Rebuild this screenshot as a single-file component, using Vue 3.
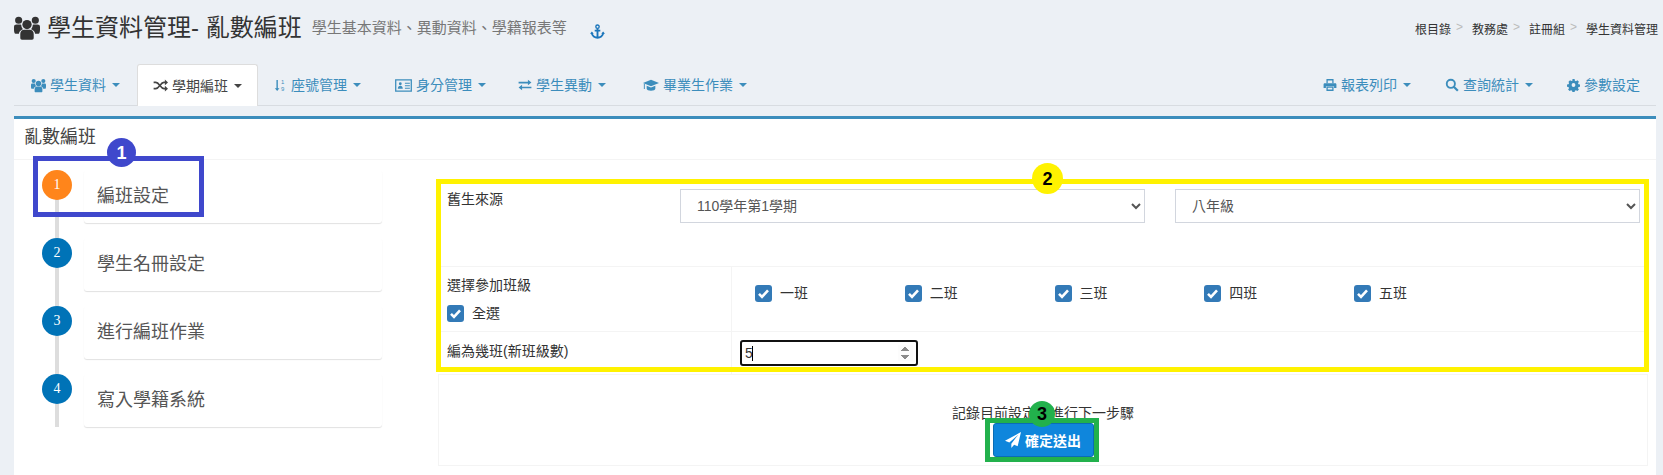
<script setup>
import { ref } from 'vue'

const users = [
  { d: 'M12 4.500a4.300 4.300 0 1 0 0 8.600a4.300 4.300 0 0 0 0-8.600z' },
  { d: 'M5.800 21v-3.500c0-2.500 1.600-3.900 3.600-3.900h5.200c2 0 3.600 1.400 3.600 3.900V21c0 1-.6 1.800-1.600 1.800H7.400c-1 0-1.600-.8-1.600-1.800z' },
  { d: 'M4.300 1.500a3.300 3.300 0 1 0 0 6.600a3.300 3.300 0 0 0 0-6.600z' },
  { d: 'M19.700 1.500a3.300 3.300 0 1 0 0 6.600a3.300 3.300 0 0 0 0-6.600z' },
  { d: 'M0 13.500v-2.500c0-1.400 1-2.200 2.400-2.200h3c.5 0 1 .1 1.300.4a5.500 5.500 0 0 0 1.500 4c-2 .6-3.500 2.200-3.700 4H1.400C.5 17.200 0 15.500 0 13.500z' },
  { d: 'M24 13.500v-2.500c0-1.400-1-2.200-2.400-2.200h-3c-.5 0-1 .1-1.300.4a5.500 5.500 0 0 1-1.500 4c2 .6 3.500 2.200 3.700 4h3.100c.9 0 1.400-1.700 1.400-3.700z' }
]
const tabs = [
  { label: '學生資料', slot: 19, w: 15, first: true, paths: users, caret: true },
  { label: '學期編班', slot: 19, w: 15, active: true, caret: true, paths: [
    { d: 'M1 7h3.500c5.500 0 7.500 10 13 10h2.500', line: 2.600 },
    { d: 'M1 17h3.500c5.500 0 7.500-10 13-10h2.500', line: 2.600 },
    { d: 'M19 2.500l5 4.500-5 4.500z' },
    { d: 'M19 12.500l5 4.500-5 4.500z' } ] },
  { label: '座號管理', slot: 17, w: 13, caret: true, paths: [
    { d: 'M4.500 2h2.600v15h3l-4.300 5-4.300-5h3z' } ],
    texts: [ { t: '1', y: 10 }, { t: '9', y: 22 } ] },
  { label: '身分管理', slot: 23, w: 17, caret: true, paths: [
    { d: 'M1 4h22v16H1z', line: 1.800 },
    { d: 'M7.500 7.500a2 2 0 1 0 0 4a2 2 0 0 0 0-4zM4 16.500c0-2.500 1.500-4 3.500-4s3.500 1.500 3.500 4z' },
    { d: 'M14 8h7v1.600h-7zM14 11.500h7v1.600h-7zM14 15h7v1.600h-7z' } ] },
  { label: '學生異動', slot: 18, w: 14, caret: true, paths: [
    { d: 'M1 6.500h16V3l6 4.800-6 4.800V9.300H1z' },
    { d: 'M23 17.700H7v3.500l-6-4.800 6-4.800v3.300h16z' } ] },
  { label: '畢業生作業', slot: 25, w: 16, caret: true, paths: [
    { d: 'M12 4L0 9l12 5 12-5z' },
    { d: 'M5.500 13v4.500c0 1.800 3 3 6.500 3s6.500-1.200 6.500-3V13L12 15.700z' },
    { d: 'M1.300 10v8h1.400v-8z' } ] },
  { label: '報表列印', slot: 18, w: 14, caret: true, push: true, right: true, paths: [
    { d: 'M7 9V3h10v6', line: 2.200 },
    { d: 'M3 9h18c1 0 2 1 2 2v6h-4v-3H5v3H1v-6c0-1 1-2 2-2z' },
    { d: 'M7 15.500h10V21H7z', line: 2.200 } ] },
  { label: '查詢統計', slot: 18, w: 14, caret: true, right: true, paths: [
    { d: 'M10 3a7 7 0 1 0 0 14a7 7 0 0 0 0-14z', line: 3.200 },
    { d: 'M15 15l7 7', line: 3.800 } ] },
  { label: '參數設定', slot: 17, w: 14, paths: [
    { odd: true, d: 'M10 1h4l.6 3 2 .9 2.600-1.700 2.800 2.800-1.700 2.600.9 2 3 .6v4l-3 .6-.9 2 1.700 2.600-2.800 2.800-2.600-1.700-2 .9-.6 3h-4l-.6-3-2-.9-2.600 1.700-2.800-2.800 1.700-2.600-.9-2-3-.6v-4l3-.6.9-2L2.800 5.800l2.800-2.800 2.600 1.700 2-.9zM12 8.500a3.500 3.500 0 1 0 0 7a3.500 3.500 0 0 0 0-7z' } ] }
]
const crumbs = ['根目錄', '教務處', '註冊組', '學生資料管理']
const steps = ['編班設定', '學生名冊設定', '進行編班作業', '寫入學籍系統']
const classes = ['一班', '二班', '三班', '四班', '五班']
const count = ref(5)
</script>

<template>
  <div class="page">
    <header class="head">
      <svg class="title-icon" viewBox="0 1 24 22" width="26" height="24">
        <path v-for="p in users" :key="p.d" :d="p.d" />
      </svg>
      <h1 class="title">學生資料管理- 亂數編班</h1>
      <span class="sub">學生基本資料、異動資料、學籍報表等</span>
      <svg class="anchor" viewBox="0 0 24 24" width="15" height="15">
        <path d="M12 1.500a2.700 2.700 0 1 0 0 5.400a2.700 2.700 0 0 0 0-5.400z" fill="none" stroke="currentColor" stroke-width="2.200" />
        <path d="M12 7v15M7.500 10.500h9M3 14.500c0 4.500 5 7.500 9 7.500s9-3 9-7.500" fill="none" stroke="currentColor" stroke-width="3" />
        <path d="M0 15.500l3-3.500 3 3.500zM18 15.500l3-3.500 3 3.500z" fill="currentColor" />
      </svg>
      <ol class="crumbs">
        <li v-for="(c, i) in crumbs" :key="c" class="crumb">
          <span>{{ c }}</span><span v-if="i < crumbs.length - 1" class="sep">&gt;</span>
        </li>
      </ol>
    </header>

    <nav class="tabs">
      <a v-for="t in tabs" :key="t.label" class="tab" :class="{ active: t.active, push: t.push, first: t.first, right: t.right }">
        <span class="tab-slot" :style="{ width: t.slot + 'px' }">
          <svg viewBox="0 0 24 24" :width="t.w" :height="t.w">
            <template v-for="p in t.paths" :key="p.d">
              <path v-if="p.line" :d="p.d" fill="none" stroke="currentColor" :stroke-width="p.line" />
              <path v-else :d="p.d" fill="currentColor" :fill-rule="p.odd ? 'evenodd' : 'nonzero'" />
            </template>
            <text v-for="x in t.texts" :key="x.t" x="13" :y="x.y" class="mini">{{ x.t }}</text>
          </svg>
        </span>
        <span>{{ t.label }}</span>
        <i v-if="t.caret" class="caret"></i>
      </a>
    </nav>

    <section class="panel">
      <div class="panel-head">亂數編班</div>
      <div class="panel-body">
        <ul class="steps">
          <li v-for="(s, i) in steps" :key="s" class="step">
            <div class="rail">
              <span class="dot" :class="{ current: i === 0 }">{{ i + 1 }}</span>
            </div>
            <div class="card">{{ s }}</div>
          </li>
        </ul>

        <div class="form">
          <div class="row-source">
            <label class="source-label">舊生來源</label>
            <select class="sel">
              <option>110學年第1學期</option>
            </select>
            <select class="sel">
              <option>八年級</option>
            </select>
          </div>
          <div class="row-grid row-classes">
            <div class="cell-label">
              <div class="join">選擇參加班級</div>
              <label class="check"><span class="box"><svg viewBox="0 0 17 17" width="17" height="17"><path d="M4 8.800l3 3 6-6.500" fill="none" stroke="#fff" stroke-width="2.600" /></svg></span>全選</label>
            </div>
            <div class="cell-classes">
              <label v-for="c in classes" :key="c" class="check cls">
                <span class="box"><svg viewBox="0 0 17 17" width="17" height="17"><path d="M4 8.800l3 3 6-6.500" fill="none" stroke="#fff" stroke-width="2.600" /></svg></span>{{ c }}
              </label>
            </div>
          </div>
          <div class="row-grid row-count">
            <div class="cell-label count-label">編為幾班(新班級數)</div>
            <div class="cell-count">
              <div class="num-wrap">
                <input v-model="count" class="num" type="number" />
                <span class="cursor"></span>
              </div>
            </div>
          </div>
          <div class="submit-box">
            <p class="hint">記錄目前設定並進行下一步驟</p>
            <button class="send" type="button">
              <svg viewBox="0 0 24 24" width="16" height="16"><path d="M24 0L0 13l6.500 2.700L20 4 9.500 17.500V24l4.200-5 5.300 2.200z" fill="#fff" /></svg>
              確定送出
            </button>
          </div>
        </div>
      </div>
    </section>

    <div class="mark mark-blue"></div>
    <div class="badge badge-blue">1</div>
    <div class="mark mark-yellow"></div>
    <div class="badge badge-yellow">2</div>
    <div class="mark mark-green"></div>
    <div class="badge badge-green">3</div>
  </div>
</template>

<style>
html, body { margin: 0; background: #ecf0f5; }
</style>

<style scoped>
* { box-sizing: border-box; }
.page {
  position: relative;
  height: 475px;
  overflow: hidden;
  background: #ecf0f5;
  color: #333;
  font-family: "Liberation Sans", "Noto Sans CJK TC", sans-serif;
  font-size: 14px;
}
.head {
  display: flex;
  align-items: center;
  height: 64px;
  padding: 0 5px 8px 14px;
}
.title-icon { fill: #333; flex: none; }
.title {
  margin: 0 0 0 7px;
  font-size: 24px;
  font-weight: 400;
  line-height: 28px;
}
.sub { margin-left: 10px; font-size: 15px; color: #777; line-height: 20px; }
.anchor { margin-left: 23px; margin-top: 6px; color: #1a75bb; }
.crumbs {
  display: flex;
  margin: 0 0 0 auto;
  padding: 0;
  list-style: none;
  font-size: 12px;
  color: #333;
}
.crumb { display: flex; }
.sep { margin: 0 9px 0 5px; color: #bbb; }
.tabs {
  display: flex;
  height: 42px;
  margin: 0 7px 0 14px;
  padding-left: 1px;
  border-bottom: 1px solid #d8dce1;
}
.tab {
  display: flex;
  align-items: center;
  height: 41px;
  padding: 0 15px;
  color: #3c8dbc;
  line-height: 20px;
  border: 1px solid transparent;
  border-width: 1px 1px 0;
  border-radius: 3px 3px 0 0;
}
.tab.first { margin-right: 1px; }
.tab.right { margin-right: 2px; }
.tab.active {
  height: 42px;
  background: #fff;
  color: #444;
  border-color: #ddd;
}
.tab.push { margin-left: auto; }
.tab-slot { display: flex; align-items: center; justify-content: flex-end; padding-right: 4px; flex: none; }
.mini { font-size: 11px; font-family: "Liberation Sans", sans-serif; fill: currentColor; }
.caret {
  width: 0;
  height: 0;
  margin-left: 6px;
  border-top: 4px solid currentColor;
  border-left: 4px solid transparent;
  border-right: 4px solid transparent;
}
.panel {
  height: 359px;
  margin: 10px 7px 0 14px;
  border-top: 3px solid #3c8dbc;
  background: #fff;
}
.panel-head {
  height: 41px;
  padding: 0 10px;
  border-bottom: 1px solid #f4f4f4;
  font-size: 18px;
  line-height: 36px;
  color: #444;
}
.panel-body { display: flex; align-items: flex-start; }
.steps {
  flex: none;
  width: 368px;
  margin: 0;
  padding: 10px 0 0 28px;
  list-style: none;
}
.step { display: flex; height: 68px; }
.rail { position: relative; width: 30px; margin-right: 12px; }
.rail::before {
  content: "";
  position: absolute;
  left: 13px;
  top: 15px;
  width: 4px;
  height: 68px;
  background: #ddd;
}
.step:last-child .rail::before { height: 38px; }
.dot {
  position: relative;
  display: block;
  width: 30px;
  height: 30px;
  border-radius: 50%;
  background: #0073b7;
  color: #fff;
  font-family: "Liberation Serif", serif;
  font-size: 14px;
  line-height: 30px;
  text-align: center;
}
.dot.current { background: #ff851b; }
.card {
  width: 298px;
  height: 53px;
  padding-left: 13px;
  border-radius: 3px;
  box-shadow: 0 1px 1px rgba(0, 0, 0, .12);
  font-size: 18px;
  line-height: 52px;
  color: #555;
}
.form { flex: 1; margin: 20px 8px 0 56px; min-width: 0; }
.row-source {
  display: grid;
  grid-template-columns: 203px 465px 465px;
  column-gap: 30px;
  height: 87px;
  padding: 9px 0 0 9px;
  border-bottom: 1px solid #f4f4f4;
}
.source-label { line-height: 20px; }
.sel {
  height: 34px;
  padding: 0 12px;
  border: 1px solid #d2d6de;
  background-color: #fff;
  color: #555;
  font: inherit;
  border-radius: 0;
}
.row-grid {
  display: grid;
  grid-template-columns: 294px 1fr;
  border-bottom: 1px solid #f4f4f4;
}
.row-classes { height: 65px; }
.row-count { height: 42px; border-bottom: 0; }
.cell-label { padding: 8px 0 0 9px; border-right: 1px solid #f4f4f4; line-height: 20px; }
.join { margin-bottom: 8px; }
.check { display: flex; align-items: center; line-height: 20px; }
.box {
  display: block;
  flex: none;
  width: 17px;
  height: 17px;
  margin-right: 8px;
  border-radius: 3px;
  background: #337ab7;
}
.box svg { display: block; }
.cell-classes { display: grid; grid-template-columns: repeat(5, 149.750px); padding: 16px 0 0 23px; align-items: start; }
.count-label { padding-top: 9px; }
.cell-count { padding: 8px 0 0 8px; }
.num-wrap { position: relative; width: 178px; }
.num {
  display: block;
  width: 178px;
  height: 26px;
  padding: 0 3px;
  border: 2px solid #111;
  border-radius: 3px;
  outline: 0;
  background: #fff;
  color: #333;
  font: 14px "Liberation Sans", sans-serif;
}
.num::-webkit-inner-spin-button { opacity: 1; }
.cursor {
  position: absolute;
  left: 12px;
  top: 6px;
  width: 1px;
  height: 15px;
  background: #000;
}
.submit-box {
  height: 92px;
  padding-top: 28px;
  border: 1px solid #f4f4f4;
  text-align: center;
}
.hint { margin: 0; line-height: 20px; }
.send {
  display: inline-flex;
  align-items: center;
  justify-content: center;
  gap: 4px;
  width: 101px;
  height: 34px;
  padding: 0;
  border: 1px solid #0b6cb5;
  border-radius: 3px;
  background: #0f86dc;
  color: #fff;
  font: 700 14px "Liberation Sans", "Noto Sans CJK TC", sans-serif;
}
.mark { position: absolute; border: 5px solid; }
.mark-blue { left: 33px; top: 156px; width: 171px; height: 61px; border-color: #3f48cc; }
.mark-yellow { left: 436px; top: 179px; width: 1213px; height: 193px; border-color: #fff200; }
.mark-green { left: 985px; top: 418px; width: 114px; height: 44px; border-color: #22b14c; }
.badge {
  position: absolute;
  border-radius: 50%;
  font: 700 18px/1 "Liberation Sans", sans-serif;
  display: flex;
  align-items: center;
  justify-content: center;
}
.badge-blue { left: 107px; top: 138px; width: 29px; height: 29px; background: #3f48cc; color: #fff; }
.badge-yellow { left: 1032px; top: 163px; width: 31px; height: 31px; background: #fff200; color: #000; }
.badge-green { left: 1029px; top: 401px; width: 26px; height: 26px; background: #22b14c; color: #000; }
</style>
